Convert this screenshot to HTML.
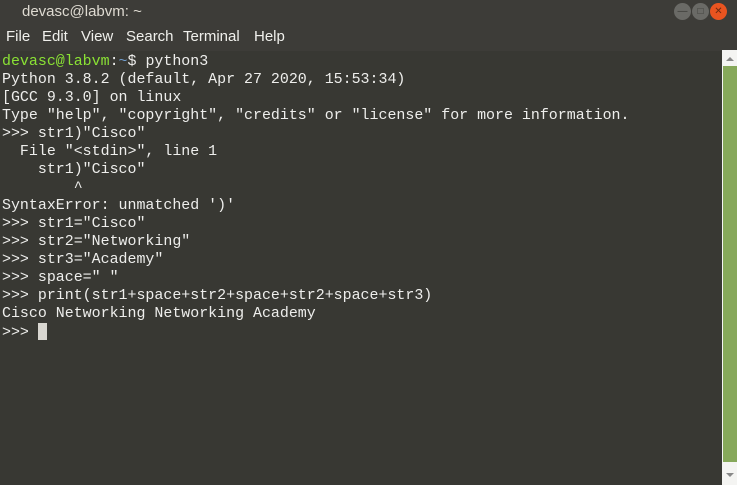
<!DOCTYPE html>
<html><head><style>
body{margin:0;width:737px;height:485px;overflow:hidden;background:#383833;font-family:"Liberation Sans","DejaVu Sans",sans-serif;position:relative}
#title{position:absolute;left:0;top:0;width:737px;height:25px;background:#3d3c38;color:#dfdbd2;font-size:15px}
#title span{position:absolute;left:22px;top:3px}
#menu{position:absolute;left:0;top:25px;width:737px;height:26px;background:#3d3c38;color:#f0f0ec;font-size:15px}
#menu span{position:absolute;top:3px}
.btn{position:absolute;top:3px;width:17px;height:17px;border-radius:50%;background:#6a6a66;color:#3a3a36;font-size:10px;text-align:center;line-height:17px}
#term{position:absolute;left:2px;top:53px;font-family:"Liberation Mono",monospace;font-size:14.95px;line-height:18px;color:#eeeeec;white-space:pre;margin:0}
.g{color:#8ae234}.b{color:#729fcf}
#sb{position:absolute;left:722px;top:50px;width:15px;height:435px;background:#f4f4f2}
#thumb{position:absolute;left:723px;top:66px;width:14px;height:396px;background:#86a85a}
.cur{display:inline-block;width:9px;height:17px;background:#d8d6d0;vertical-align:-4px}
</style></head><body>
<div id="title"><span>devasc@labvm: ~</span>
<div class="btn" style="left:674px">—</div>
<div class="btn" style="left:692px">□</div>
<div class="btn" style="left:710px;background:#e95420;color:#6a2a10">✕</div>
</div>
<div id="menu"><span style="left:6px">File</span><span style="left:42px">Edit</span><span style="left:81px">View</span><span style="left:126px">Search</span><span style="left:183px">Terminal</span><span style="left:254px">Help</span></div>
<pre id="term"><span class="g">devasc@labvm</span>:<span class="b">~</span>$ python3
Python 3.8.2 (default, Apr 27 2020, 15:53:34)
[GCC 9.3.0] on linux
Type "help", "copyright", "credits" or "license" for more information.
&gt;&gt;&gt; str1)"Cisco"
  File "&lt;stdin&gt;", line 1
    str1)"Cisco"
        ^
SyntaxError: unmatched ')'
&gt;&gt;&gt; str1="Cisco"
&gt;&gt;&gt; str2="Networking"
&gt;&gt;&gt; str3="Academy"
&gt;&gt;&gt; space=" "
&gt;&gt;&gt; print(str1+space+str2+space+str2+space+str3)
Cisco Networking Networking Academy
&gt;&gt;&gt; <span class="cur"></span></pre>
<div id="sb"></div>
<div id="thumb"></div>
<div style="position:absolute;left:726px;top:57px;width:0;height:0;border-left:4px solid transparent;border-right:4px solid transparent;border-bottom:4px solid #888"></div>
<div style="position:absolute;left:726px;top:473px;width:0;height:0;border-left:4px solid transparent;border-right:4px solid transparent;border-top:4px solid #888"></div>
</body></html>
